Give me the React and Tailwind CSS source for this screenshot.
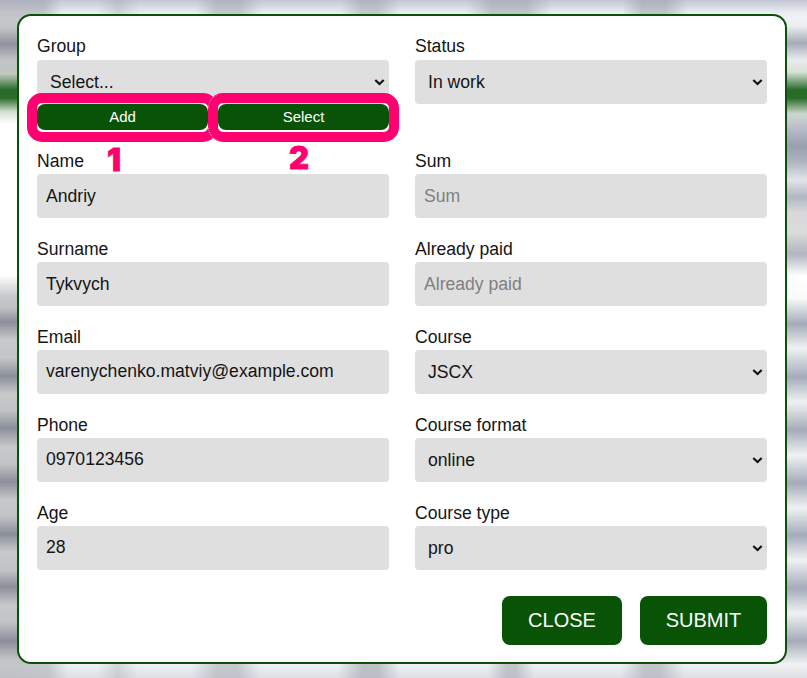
import React from "react";

const Chevron = () => (
  <svg className="mr-1 shrink-0" width="11" height="8" viewBox="0 0 11 8" fill="none">
    <path d="M1.3 2 L5.5 6 L9.7 2" stroke="#141414" strokeWidth="2.2" />
  </svg>
);

const Label = ({ children, raised }) => (
  <div className={raised ? "h-[26px] leading-[24px]" : "h-[26px] leading-[26px]"}>{children}</div>
);

const Input = ({ label, value, placeholder, raised }) => (
  <div className="h-[70px]">
    <Label>{label}</Label>
    <div className={`flex h-11 items-center rounded bg-[#dfdfdf] pl-[9px] ${raised ? "pb-[2px]" : ""}`}>
      {value ? <span>{value}</span> : <span className="text-[#808080]">{placeholder}</span>}
    </div>
  </div>
);

const Select = ({ label, value, raised }) => (
  <div className="h-[70px]">
    <Label raised={raised}>{label}</Label>
    <div className="flex h-11 items-center justify-between rounded bg-[#dfdfdf] pl-[13px]">
      <span>{value}</span>
      <Chevron />
    </div>
  </div>
);

const SmallButton = ({ children, mark, markClass, seam }) => (
  <div className="relative flex h-[26px] flex-1 items-center justify-center rounded-lg bg-[#085306] text-[15px] text-white">
    {children}
    <div className="absolute -inset-x-[10px] -top-[11px] h-[49px] rounded-[15px] border-10 border-[#ff0071]" />
    {seam && (
      <>
        <div className="absolute -left-[10px] -top-[11px] h-[15px] w-[10px] overflow-hidden">
          <div className="h-[30px] w-[30px] rounded-[15px] border border-dotted border-[#ff9cc6]" />
        </div>
        <div className="absolute -left-[10px] top-[23px] flex h-[15px] w-[10px] items-end overflow-hidden">
          <div className="h-[30px] w-[30px] shrink-0 rounded-[15px] border border-dotted border-[#ff9cc6]" />
        </div>
      </>
    )}
    <span className={markClass}>{mark}</span>
  </div>
);

export default function App() {
  return (
    <div className="h-[678px] w-[807px] overflow-hidden bg-white px-[17px] py-[14px] font-['Liberation_Sans',Arial,sans-serif] text-[17.6px] text-[#151515]">
      <Backdrop />
      <div className="relative flex h-[650px] w-[770px] flex-col rounded-[14px] border-2 border-[#0b5109] bg-white px-[18px] pt-[18px]">
        <div className="grid grid-cols-2 gap-x-[26px] gap-y-[18px]">
          <div className="h-[96px]">
            <Select raised label="Group" value="Select..." />
            <div className="flex gap-[10px]">
              <SmallButton mark="1" markClass="absolute left-[70px] top-[36px] font-['Inter'] text-[31px] leading-[40px] font-black text-[#ff0071] [-webkit-text-stroke:0.8px_#ff0071]">
                Add
              </SmallButton>
              <SmallButton seam mark="2" markClass="absolute left-[71px] top-[34px] font-['Inter'] text-[31px] leading-[40px] font-black text-[#ff0071] [-webkit-text-stroke:0.8px_#ff0071]">
                Select
              </SmallButton>
            </div>
          </div>
          <Select raised label="Status" value="In work" />
          <Input label="Name" value="Andriy" />
          <Input label="Sum" placeholder="Sum" />
          <Input label="Surname" value="Tykvych" />
          <Input label="Already paid" placeholder="Already paid" />
          <Input raised label="Email" value="varenychenko.matviy@example.com" />
          <Select label="Course" value="JSCX" />
          <Input raised label="Phone" value="0970123456" />
          <Select label="Course format" value="online" />
          <Input raised label="Age" value="28" />
          <Select label="Course type" value="pro" />
        </div>
        <div className="mt-[26px] flex justify-end gap-[18px] text-[20px] text-white">
          <div className="flex h-[49px] w-[120px] items-center justify-center rounded-lg bg-[#085306] pb-[2px]">CLOSE</div>
          <div className="flex h-[49px] w-[127px] items-center justify-center rounded-lg bg-[#085306] pb-[2px]">SUBMIT</div>
        </div>
      </div>
    </div>
  );
}

// Out-of-focus table behind the dialog: the strips visible along each edge.
function Backdrop() {
  return (
    <div className="absolute left-0 top-0 h-[678px] w-[807px] overflow-hidden bg-[#eceef1]">
      <div className="absolute left-0 top-0 h-[678px] w-[60px] bg-[linear-gradient(180deg,#aeb0b8_0px,#c6c7c9_18px,#c2c3c6_28px,#8f929c_44px,#c2c4c6_60px,#bfc8be_74px,#286a27_90px,#2c6c2b_98px,#d5e0d5_112px,#ffffff_124px,#ffffff_275px,#c8c9cb_296px,#bfc0c4_308px,#8b8f9a_322px,#c8c9ca_340px,#c4c5c7_358px,#8b8f9a_376px,#c8c9ca_394px,#c2c3c6_410px,#8b8f9a_428px,#c8c9ca_447px,#c2c3c6_464px,#8b8f9a_482px,#c8c9ca_500px,#c2c3c6_516px,#8b8f9a_534px,#c8c9ca_552px,#c2c3c6_570px,#8b8f9a_587px,#c8c9ca_605px,#c2c3c6_622px,#8b8f9a_641px,#c4c5c7_660px,#bfc1c4_678px)]" />
      <div className="absolute right-0 top-0 h-[678px] w-[47px] bg-[linear-gradient(180deg,#c0c3d0_0px,#f1f2f5_16px,#eceef1_26px,#a4abb9_43px,#e9ebee_60px,#d7e2d8_72px,#286a27_90px,#286a27_98px,#cdd8cf_114px,#c3c8d0_122px,#989fae_146px,#b0b5c1_162px,#e3e4e9_180px,#b1b6c2_197px,#d8d8da_212px,#dcdcdc_232px,#b0b5c1_254px,#ffffff_276px,#fafafb_298px,#a4abb9_324px,#f0f1f3_348px,#a4abb9_377px,#f0f1f3_402px,#a4abb9_430px,#f0f1f3_455px,#a4abb9_483px,#f0f1f3_508px,#a4abb9_535px,#f0f1f3_560px,#a4abb9_588px,#f0f1f3_613px,#a4abb9_641px,#f0f1f3_664px,#dddfe3_678px)]" />
      <div className="absolute left-0 top-0 h-[14px] w-[807px] bg-[linear-gradient(90deg,#c4c5c8_0px,#c4c5c8_44px,#f0f1f5_62px,#f0f1f5_98px,#d3d4d8_118px,#f0f1f5_140px,#f0f1f5_196px,#c8c9cd_216px,#c8c9cd_240px,#f0f1f5_262px,#f0f1f5_340px,#c8c9cd_362px,#c8c9cd_378px,#f0f1f5_400px,#f0f1f5_466px,#c4c5ca_492px,#c4c5ca_526px,#f0f1f5_552px,#f0f1f5_622px,#c4c5ca_642px,#c4c5ca_666px,#f0f1f5_688px,#f0f1f5_807px)]" />
      <div className="absolute left-0 top-0 h-[14px] w-[807px] bg-linear-to-b from-[#969db5]/50 to-transparent" />
      <div className="absolute bottom-0 left-0 h-[14px] w-[807px] bg-[linear-gradient(90deg,#c4c6c8_0px,#c8cacc_48px,#f0f2f4_68px,#f0f2f4_98px,#d4d6d9_118px,#f0f2f4_138px,#f0f2f4_192px,#c8cacd_216px,#c8cacd_238px,#f0f2f4_260px,#f0f2f4_338px,#c0c2c6_362px,#c0c2c6_378px,#f0f2f4_400px,#f0f2f4_488px,#c4c6ca_506px,#c4c6ca_516px,#f0f2f4_534px,#f0f2f4_622px,#c4c6ca_644px,#c4c6ca_660px,#f0f2f4_684px,#f0f2f4_807px)]" />
      <div className="absolute bottom-0 left-0 h-[14px] w-[807px] bg-linear-to-t from-[#aab0bf]/30 to-transparent" />
    </div>
  );
}
